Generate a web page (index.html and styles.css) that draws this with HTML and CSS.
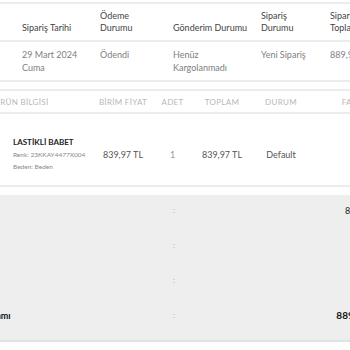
FILE: index.html
```html
<!DOCTYPE html>
<html lang="tr">
<head>
<meta charset="utf-8">
<link rel="stylesheet" href="styles.css">
</head>
<body>
<div class="page">
  <div class="info">
    <div class="info-row info-head">
      <div class="cell first">Sipariş Tarihi</div>
      <div class="cell">Ödeme<br>Durumu</div>
      <div class="cell">Gönderim Durumu</div>
      <div class="cell">Sipariş<br>Durumu</div>
      <div class="cell">Sipariş<br>Toplamı</div>
    </div>
    <div class="info-row info-body">
      <div class="cell first">29 Mart 2024<br>Cuma</div>
      <div class="cell">Ödendi</div>
      <div class="cell">Henüz<br>Kargolanmadı</div>
      <div class="cell">Yeni Sipariş</div>
      <div class="cell">889,97 TL</div>
    </div>
  </div>

  <div class="items">
    <div class="items-row items-head">
      <div class="c prod">ÜRÜN BİLGİSİ</div>
      <div class="c">BİRİM FİYAT</div>
      <div class="c">ADET</div>
      <div class="c">TOPLAM</div>
      <div class="c">DURUM</div>
      <div class="c">FATURA</div>
    </div>
    <div class="items-row items-body">
      <div class="c prod">
        <div class="pname">LASTİKLİ BABET</div>
        <div class="pmeta">Renk: 23KKAY4477X004</div>
        <div class="pmeta">Beden: Beden</div>
      </div>
      <div class="c">839,97 TL</div>
      <div class="c qty">1</div>
      <div class="c">839,97 TL</div>
      <div class="c">Default</div>
      <div class="c"></div>
    </div>
  </div>

  <div class="summary">
    <div class="srow">
      <div class="lbl">Ara Toplam</div><div class="colon">:</div><div class="val">839,97 TL</div>
    </div>
    <div class="srow">
      <div class="lbl">Kargo</div><div class="colon">:</div><div class="val">0 TL</div>
    </div>
    <div class="srow">
      <div class="lbl">İndirim</div><div class="colon">:</div><div class="val">0 TL</div>
    </div>
    <div class="srow total">
      <div class="lbl">Genel Toplamı</div><div class="colon">:</div><div class="val">889,97 TL</div>
    </div>
  </div>
</div>
</body>
</html>
```
FILE: styles.css
```css
html, body {
  margin: 0;
  padding: 0;
  overflow: hidden;
  background: #fff;
}
body {
  font-family: Lato, "Open Sans", "DejaVu Sans", sans-serif;
  font-size: 9px;
  color: #555;
}
.page {
  width: 350px;
  padding-top: 2px;
}

/* top info table */
.info {
  border-top: 2px solid #ececec;
  width: 420px;
}
.info-row {
  display: grid;
  grid-template-columns: 100px 73px 88px 69px 90px;
  border-bottom: 2px solid #ececec;
}
.info-head {
  height: 36px;
  align-items: end;
  color: #444;
}
.info-head .cell {
  padding-bottom: 6px;
  line-height: 12px;
  white-space: nowrap;
}
.info-body {
  height: 38px;
  align-items: start;
  color: #808080;
}
.info-body .cell {
  padding-top: 6px;
  line-height: 13px;
  white-space: nowrap;
}
.cell.first {
  padding-left: 22px;
}

/* items table */
.items {
  margin-top: 7px;
  margin-left: -6px;
  border-top: 2px solid #ececec;
  width: 420px;
}
.items-row {
  display: grid;
  grid-template-columns: 104px 50px 49px 50px 68px 85px;
  border-bottom: 2px solid #ececec;
  align-items: center;
}
.items-head {
  height: 21px;
  color: #b8b8b8;
  font-size: 8px;
  letter-spacing: 0.3px;
}
.items-head .c {
  white-space: nowrap;
  display: flex;
  justify-content: center;
}
.items-head .c.prod {
  justify-content: flex-start;
}
.items-body {
  height: 73px;
  padding-top: 10px;
  box-sizing: border-box;
  color: #555;
}
.c {
  text-align: center;
  white-space: nowrap;
}
.c.prod {
  text-align: left;
}
.items-body .c.prod {
  padding-left: 19px;
  padding-bottom: 0;
}
.qty {
  color: #999;
}
.pname {
  font-weight: 700;
  color: #222;
  font-size: 8px;
  line-height: 13px;
}
.pmeta {
  font-size: 6.5px;
  color: #8a8a8a;
  line-height: 12px;
}

/* summary box */
.summary {
  margin-top: 8px;
  margin-left: -46px;
  width: 466px;
  background: #eeeeee;
  border-bottom: 2px solid #e2e2e2;
  padding: 0 0 10px;
  display: flex;
  flex-direction: column;
  gap: 5px;
}
.srow {
  display: grid;
  grid-template-columns: 219px 8px 204px;
  height: 30px;
  align-items: center;
  color: #333;
}
.colon {
  color: #aaa;
  font-size: 8px;
}
.val {
  text-align: right;
  color: #222;
  white-space: nowrap;
}
.total .lbl,
.total .val {
  font-weight: 700;
  color: #111;
}
.total .val {
  font-size: 10px;
  padding-right: 4px;
}
```
